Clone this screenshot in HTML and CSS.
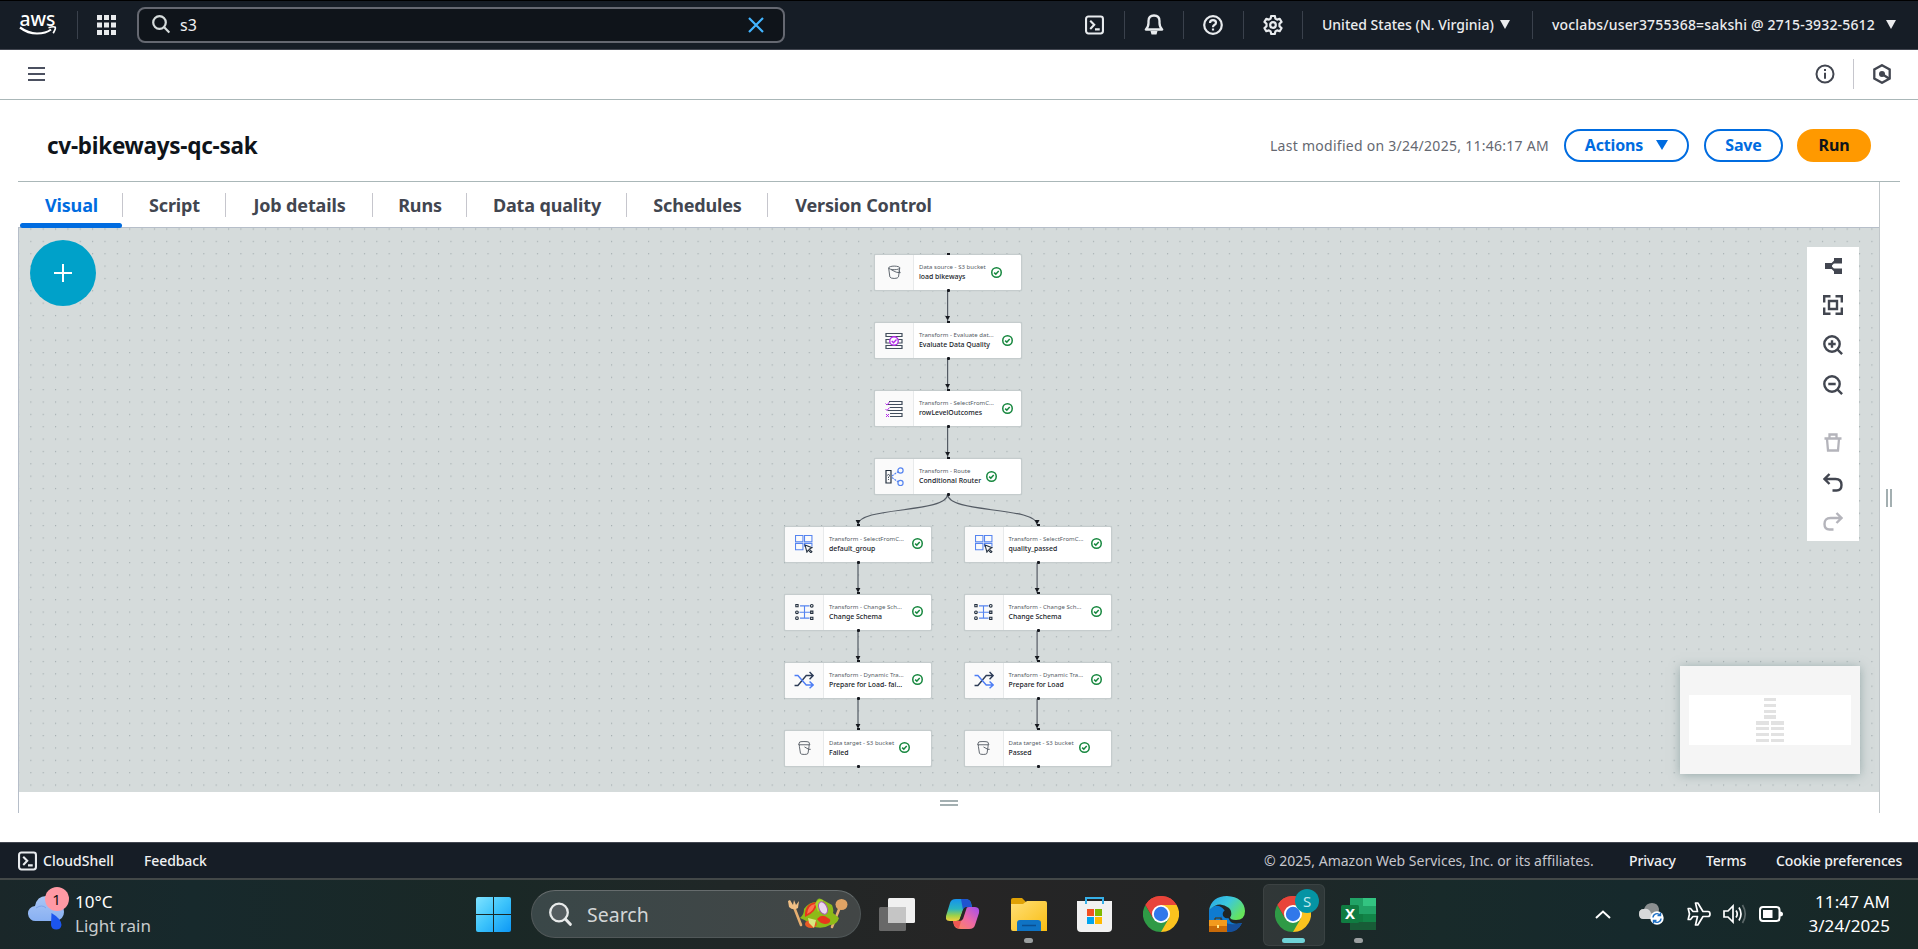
FILE: index.html
```html
<!DOCTYPE html>
<html lang="en">
<head>
<meta charset="utf-8">
<title>cv-bikeways-qc-sak</title>
<link rel="stylesheet" href="styles.css">
</head>
<body>
<svg class="defs" width="0" height="0">
  <defs>
    <symbol id="ok" viewBox="0 0 16 16"><circle cx="8" cy="8" r="6.900" fill="none" stroke="#16873e" stroke-width="2.200"/><path d="M4.600 8.200l2.400 2.200 4.200-4.600" fill="none" stroke="#16873e" stroke-width="2.200"/></symbol>
    <symbol id="shell" viewBox="0 0 20 20"><rect x="1.1" y="1.1" width="17.8" height="17.8" rx="2.5" fill="none" stroke="#e8ebee" stroke-width="2.200"/><path d="M5.500 5.500l4.200 4.300-4.200 4.300M10.500 14.600h5" fill="none" stroke="#e8ebee" stroke-width="2.200"/></symbol>
    <symbol id="bucket" viewBox="0 0 24 26"><g fill="none" stroke="#545b64" stroke-width="1.700"><ellipse cx="11.500" cy="4.500" rx="10.300" ry="3.300"/><path d="M1.200 4.500l2.200 16.500q1 3 8 3t8-3l2.300-16.500M6 8q10 6 16.500 5.500 0-2-3-3.500"/></g></symbol>
    <symbol id="target" viewBox="0 0 24 26"><g fill="none" stroke="#545b64" stroke-width="1.700"><path d="M1 7l2-5q1-1 8-1t9 1l2 5zM2.500 7v3l2 13q1 2 7 2t7-2l2-13V7M12 11l8 4.500h3.500"/></g></symbol>
    <symbol id="pick" viewBox="0 0 34 34"><g fill="none" stroke="#5584f0" stroke-width="2"><path d="M1 1h14v12H1zM18 1h14v12H18zM1 16h14v12H1zM18 22v-6h14v6"/></g><path d="M19 19l13 5-5 2.500 5 5-2 2-5-5-2.500 4z" fill="#fafafa" stroke="#232f3e" stroke-width="2"/></symbol>
    <symbol id="schema" viewBox="0 0 34 30"><path d="M9 4h17M8 15.500h19M9 26h17M17 4v22" fill="none" stroke="#5584f0" stroke-width="2"/><g fill="#fafafa" stroke="#232f3e" stroke-width="2"><path d="M1.500 1.500h4v4h-4zM28 13.500h4v4h-4zM28 24.500h4v4h-4z"/><circle cx="30" cy="4" r="2.400"/><circle cx="3.500" cy="15.500" r="2.400"/><circle cx="3.500" cy="26" r="2.400"/></g></symbol>
    <symbol id="shuffle" viewBox="0 0 36 32"><g fill="none" stroke-width="2.500"><path d="M1 26h6L22 8h11M28 1.500L34.500 8 28 14.500" stroke="#2b3a55"/><path d="M1 8h6l15 17h11M28 18.500l6.500 6.500-6.500 6" stroke="#4d7df5"/></g></symbol>
    <symbol id="chrome" viewBox="0 0 36 36"><path d="M2.400 9A18 18 0 0 1 33.600 9L18 18z" fill="#ea4335"/><path d="M33.600 9A18 18 0 0 1 18 36l0-18V9z" fill="#fcc31e"/><path d="M2.400 9A18 18 0 0 0 18 36l7.800-13.500L18 18 10.200 22.500z" fill="#2f9a46"/><path d="M18 9h15.600A18 18 0 0 0 2.400 9l7.800 13.500z" fill="#e8443a"/><circle cx="18" cy="18" r="9" fill="#fff"/><circle cx="18" cy="18" r="7.200" fill="#3178ea"/></symbol>
    <linearGradient id="win" x1="0" y1="0" x2="1" y2="1"><stop offset="0" stop-color="#7fe3ff"/><stop offset=".5" stop-color="#3cc3fb"/><stop offset="1" stop-color="#0c97f5"/></linearGradient>
    <linearGradient id="fold" x1="0" y1="0" x2="1" y2="1"><stop offset="0" stop-color="#ffdf76"/><stop offset="1" stop-color="#f9bd12"/></linearGradient>
    <linearGradient id="cloud" x1="0" y1="0" x2="0" y2="1"><stop offset="0" stop-color="#a9c6f5"/><stop offset="1" stop-color="#88b0f2"/></linearGradient>
    <linearGradient id="copa" x1="0" y1="0" x2="0" y2="1"><stop offset="0" stop-color="#1692ee"/><stop offset=".45" stop-color="#2ab5c0"/><stop offset=".75" stop-color="#9bd14a"/><stop offset="1" stop-color="#f4d03c"/></linearGradient>
    <linearGradient id="copb" x1="1" y1="0" x2="0" y2="1"><stop offset="0" stop-color="#a24df0"/><stop offset=".5" stop-color="#ee6aa4"/><stop offset="1" stop-color="#fd8a52"/></linearGradient>
    <linearGradient id="edgea" x1="0" y1="0" x2="1" y2=".6"><stop offset="0" stop-color="#25a4e8"/><stop offset=".5" stop-color="#3cc8dd"/><stop offset="1" stop-color="#66e45a"/></linearGradient>
    <pattern id="dots" x="11.300" y="0.450" width="12.356" height="12.356" patternUnits="userSpaceOnUse"><circle cx=".6" cy=".6" r=".6" fill="#98a4a6"/></pattern>
  </defs>
</svg>

<header class="top">
  <svg class="logo" width="38" height="24" viewBox="0 0 38 24"><text x="0.500" y="12.500" class="logo-text" textLength="36" lengthAdjust="spacingAndGlyphs">aws</text><path d="M1 14.500q8 6 17 6t14-4" fill="none" stroke="#fff" stroke-width="2.200"/><path d="M29.500 14.700q5-1.600 6.700-.5.800 1.500-2 6" fill="none" stroke="#fff" stroke-width="1.700"/></svg>
  <i class="sep sep-a"></i>
  <svg class="grid-icon" width="19" height="20" viewBox="0 0 19 20" fill="#e9ebed"><path d="M0 0h5v5H0zM7 0h5v5H7zM14 0h5v5h-5zM0 7.500h5v5H0zM7 7.500h5v5H7zM14 7.500h5v5h-5zM0 15h5v5H0zM7 15h5v5H7zM14 15h5v5h-5z"/></svg>
  <div class="search">
    <svg width="18" height="19" viewBox="0 0 18 19" fill="none" stroke="#d5dbdb" stroke-width="2.200"><circle cx="7.500" cy="7.500" r="6.300"/><path d="M12 12l5.300 5.600"/></svg>
    <span>s3</span>
    <svg class="clear" width="16" height="16" viewBox="0 0 16 16" stroke="#42b4ff" stroke-width="2.200"><path d="M1 1l14 14M15 1L1 15"/></svg>
  </div>
  <div class="cells">
    <div class="cell"><svg width="19" height="20"><use href="#shell" width="19" height="20"/></svg></div>
    <div class="cell"><svg width="20" height="21" viewBox="0 0 20 21" fill="none" stroke="#e8ebee" stroke-width="2.300"><path d="M1.800 15.500q2.700-2.500 2.700-6.500V7q0-5.500 5.500-5.500T15.500 7v2q0 4 2.700 6.500z" stroke-linejoin="round"/><path d="M6.500 17h7l-1 3.500h-5z" fill="#e8ebee" stroke="none"/></svg></div>
    <div class="cell"><svg width="20" height="20" viewBox="0 0 20 20" fill="none" stroke="#e8ebee" stroke-width="2.200"><circle cx="10" cy="10" r="8.800"/><path d="M7 8q0-2.800 3-2.800T13 7.800q0 1.500-2 2.400-1 .6-1 2M10 13.500v2"/></svg></div>
    <div class="cell"><svg width="20" height="20" viewBox="0 0 20 20" fill="none" stroke="#e8ebee" stroke-width="2.200"><path d="M8.200 1h3.600l.6 2.600 1.700 1 2.600-.8 1.800 3.100-2 1.900v2.400l2 1.900-1.800 3.100-2.600-.8-1.700 1-.6 2.600H8.200l-.6-2.600-1.700-1-2.600.8-1.800-3.100 2-1.900V8.800l-2-1.900 1.800-3.100 2.600.8 1.700-1z" stroke-linejoin="round"/><circle cx="10" cy="10" r="2.800"/></svg></div>
    <div class="cell region"><span class="region-name">United States (N. Virginia)</span><i class="tri"></i></div>
    <div class="cell account"><span class="account-name">voclabs/user3755368=sakshi @ 2715-3932-5612</span><i class="tri"></i></div>
  </div>
</header>

<div class="bar">
  <svg width="17" height="16" viewBox="0 0 17 16"><path d="M0 2h17M0 8h17M0 14h17" stroke="#4b5060" stroke-width="2.200"/></svg>
  <div class="bar-right">
    <svg width="20" height="20" viewBox="0 0 20 20" fill="none" stroke="#424650" stroke-width="2"><circle cx="10" cy="10" r="8.500"/><path d="M10 8.800v6M10 5v2"/></svg>
    <i></i>
    <svg width="18" height="20" viewBox="0 0 18 20" fill="none" stroke="#424650" stroke-width="2.300"><path d="M9 1.200l7.700 4.300v9L9 18.800l-7.700-4.300v-9z"/><circle cx="9" cy="10" r="3" fill="#424650" stroke="none"/><path d="M9 10l7 4.500"/></svg>
  </div>
</div>

<main class="page">
  <div class="title-row">
    <h1>cv-bikeways-qc-sak</h1>
    <div class="actions">
      <span class="modified">Last modified on 3/24/2025, 11:46:17 AM</span>
      <button class="btn b-actions">Actions<i class="tri"></i></button>
      <button class="btn b-save">Save</button>
      <button class="btn b-run">Run</button>
    </div>
  </div>
  <div class="workspace">
    <nav class="tabs">
      <a class="on">Visual</a><a>Script</a><a>Job details</a><a>Runs</a><a>Data quality</a><a>Schedules</a><a>Version Control</a>
    </nav>
    <section class="canvas">
      <svg class="layer" width="1860" height="564" viewBox="0 0 1860 564">
        <rect width="1860" height="564" fill="url(#dots)"/>
        <g fill="none" stroke="#545b64" stroke-width="1.200">
          <path d="M928.600 62.500v31M928.600 130.500v31M928.600 198.500v31M928.600 266c0 20-89.600 12-89.600 31M928.600 266c0 20 89.500 12 89.500 31M839 334v31M839 402v31M839 470v31M1018.100 334v31M1018.100 402v31M1018.100 470v31"/>
        </g>
        <g fill="#16191f">
          <path id="head" d="M926.200 88h4.800l-1.800 3.500h-1.200z"/>
          <use href="#head" y="68"/><use href="#head" y="136"/>
          <use href="#head" x="-89.600" y="204"/><use href="#head" x="89.500" y="204"/><use href="#head" x="-89.600" y="272"/><use href="#head" x="89.500" y="272"/><use href="#head" x="-89.600" y="340"/><use href="#head" x="89.500" y="340"/><use href="#head" x="-89.600" y="408"/><use href="#head" x="89.500" y="408"/>
        </g>
      </svg>

      <div class="node n1"><div class="pic"><svg width="13" height="15"><use href="#bucket" width="13" height="15"/></svg></div><div class="txt"><small>Data source - S3 bucket</small><b>load bikeways</b></div><svg class="ok"><use href="#ok"/></svg></div>
      <div class="node n2"><div class="pic"><svg width="18" height="18" viewBox="0 0 36 36" fill="#fafafa"><g stroke="#414d5c" stroke-width="2.400"><path d="M2 3h32v6H2zM2 15h32v7H2zM2 27h32v6H2z"/></g><circle cx="18" cy="18" r="8.500" stroke="#b12ae8" stroke-width="2.600"/><path d="M13.500 18l3.500 3.500 6-6.500" fill="none" stroke="#b12ae8" stroke-width="2.600"/></svg></div><div class="txt full"><small>Transform - Evaluate dat...</small><b>Evaluate Data Quality</b></div><svg class="ok"><use href="#ok"/></svg></div>
      <div class="node n3"><div class="pic"><svg width="18" height="18" viewBox="0 0 36 36" fill="none"><g stroke="#414d5c" stroke-width="2.400"><path d="M8 3h26v6H5M10 15h24v6H5M10 27h24v6H10"/></g><path d="M1 7l3 3 5-6M1 18l3 3 5-6M2 28l6 6M8 28l-6 6" stroke="#b12ae8" stroke-width="2"/></svg></div><div class="txt full"><small>Transform - SelectFromC...</small><b>rowLevelOutcomes</b></div><svg class="ok"><use href="#ok"/></svg></div>
      <div class="node n4"><div class="pic"><svg width="19" height="19" viewBox="0 0 38 38" fill="none"><path d="M2 7h10v25H2z" stroke="#232f3e" stroke-width="2.400"/><path d="M5 17q0-2 2-2t2 2-2 3v2M7 24v2" stroke="#232f3e" stroke-width="1.600"/><g stroke="#5584f0" stroke-width="2.400"><circle cx="31" cy="7" r="5.200"/><circle cx="31" cy="32" r="5.200"/><path d="M14 18L26 9.500M14 21l12 8.500" stroke-dasharray="4 2"/></g></svg></div><div class="txt"><small>Transform - Route</small><b>Conditional Router</b></div><svg class="ok"><use href="#ok"/></svg></div>

      <div class="node left r5"><div class="pic"><svg width="18" height="18"><use href="#pick" width="18" height="18"/></svg></div><div class="txt full"><small>Transform - SelectFromC...</small><b>default_group</b></div><svg class="ok"><use href="#ok"/></svg></div>
      <div class="node right r5"><div class="pic"><svg width="18" height="18"><use href="#pick" width="18" height="18"/></svg></div><div class="txt full"><small>Transform - SelectFromC...</small><b>quality_passed</b></div><svg class="ok"><use href="#ok"/></svg></div>
      <div class="node left r6"><div class="pic"><svg width="19" height="18"><use href="#schema" width="19" height="18"/></svg></div><div class="txt full"><small>Transform - Change Sch...</small><b>Change Schema</b></div><svg class="ok"><use href="#ok"/></svg></div>
      <div class="node right r6"><div class="pic"><svg width="19" height="18"><use href="#schema" width="19" height="18"/></svg></div><div class="txt full"><small>Transform - Change Sch...</small><b>Change Schema</b></div><svg class="ok"><use href="#ok"/></svg></div>
      <div class="node left r7"><div class="pic"><svg width="20" height="18"><use href="#shuffle" width="20" height="18"/></svg></div><div class="txt full"><small>Transform - Dynamic Tra...</small><b>Prepare for Load- fai...</b></div><svg class="ok"><use href="#ok"/></svg></div>
      <div class="node right r7"><div class="pic"><svg width="20" height="18"><use href="#shuffle" width="20" height="18"/></svg></div><div class="txt full"><small>Transform - Dynamic Tra...</small><b>Prepare for Load</b></div><svg class="ok"><use href="#ok"/></svg></div>
      <div class="node left r8"><div class="pic"><svg width="13" height="14"><use href="#target" width="13" height="14"/></svg></div><div class="txt"><small>Data target - S3 bucket</small><b>Failed</b></div><svg class="ok"><use href="#ok"/></svg></div>
      <div class="node right r8"><div class="pic"><svg width="13" height="14"><use href="#target" width="13" height="14"/></svg></div><div class="txt"><small>Data target - S3 bucket</small><b>Passed</b></div><svg class="ok"><use href="#ok"/></svg></div>

      <button class="add"><svg width="18" height="18" viewBox="0 0 18 18"><path d="M9 0v18M0 9h18" stroke="#fff" stroke-width="2"/></svg></button>

      <div class="tools">
        <svg width="17" height="16" viewBox="0 0 17 16" fill="#424650"><path d="M0 5h7v6H0zM9 0h8v5.500H9zM9 10.500h8V16H9z"/><path d="M6 7l4-4M6 9l4 4" stroke="#424650" stroke-width="1.800"/></svg>
        <svg width="20" height="20" viewBox="0 0 20 20" fill="none" stroke="#424650" stroke-width="2.400"><path d="M1.200 7.500V1.200h6.300M12.500 1.200h6.300v6.300M18.800 12.500v6.300h-6.300M7.500 18.800H1.200v-6.300M6 6h8v8H6z"/></svg>
        <svg width="20" height="20" viewBox="0 0 20 20" fill="none" stroke="#424650" stroke-width="2.400"><circle cx="9" cy="9" r="7.700"/><path d="M14.300 14.300l4.800 4.800M9 5.300v7.400M5.300 9h7.400"/></svg>
        <svg width="20" height="20" viewBox="0 0 20 20" fill="none" stroke="#424650" stroke-width="2.400"><circle cx="9" cy="9" r="7.700"/><path d="M14.300 14.300l4.800 4.800M5.300 9h7.400"/></svg>
        <svg class="trash" width="18" height="19" viewBox="0 0 18 19" fill="none" stroke="#b4b4bb" stroke-width="2.300"><path d="M.5 5.500h17M5.500 5V1.500h7V5M3 6l1 11.500h10L15 6"/></svg>
        <svg width="20" height="19" viewBox="0 0 20 19" fill="none" stroke="#424650" stroke-width="2.400"><path d="M6.500 1L1.500 6l5 5M2 6h10.500q6 0 6 6 0 5.500-5 5.500H9.500"/></svg>
        <svg width="20" height="19" viewBox="0 0 20 19" fill="none" stroke="#b4b4bb" stroke-width="2.400"><path d="M13.500 1l5 5-5 5M18 6H7.500q-6 0-6 6 0 5.500 5 5.500h4"/></svg>
      </div>

      <svg class="minimap" width="180" height="108" viewBox="0 0 180 108"><rect width="180" height="108" fill="#f5f5f5"/><rect x="9" y="29" width="162" height="50" fill="#fff"/><g fill="#e2e2e2"><path d="M84 32h12v3H84zM84 38h12v3H84zM84 44h12v3H84zM84 49h12v4H84zM76 55h13v4H76zM91 55h13v4H91zM76 61h13v3H76zM91 61h13v3H91zM76 67h13v3H76zM91 67h13v3H91zM76 73h13v3H76zM91 73h13v3H91z"/></g></svg>
    </section>
    <div class="drag"><i></i><i></i></div>
    <div class="side-drag"><i></i><i></i></div>
  </div>
</main>

<footer class="foot">
  <svg width="19" height="20"><use href="#shell" width="19" height="20"/></svg>
  <span class="f-shell">CloudShell</span><span class="f-feed">Feedback</span>
  <span class="f-copy">© 2025, Amazon Web Services, Inc. or its affiliates.</span>
  <span class="f-priv">Privacy</span><span class="f-terms">Terms</span><span class="f-cook">Cookie preferences</span>
</footer>

<div class="taskbar">
  <div class="weather">
    <svg width="38" height="46" viewBox="0 0 38 46"><path d="M8 36a7.500 7.500 0 0 1-1-15q2-10 11-10t11 8q7 1 7 8t-8 9z" fill="url(#cloud)"/><path d="M8 23q6-4 10 0" stroke="#7fa3e8" fill="none"/><path d="M23.500 28q10 6 10 12a5.300 5.300 0 0 1-10.500 0z" fill="#1c55ee"/></svg>
    <span class="badge">1</span>
    <div><p>10°C</p><p class="dim">Light rain</p></div>
  </div>
  <div class="dock">
    <div class="app"><svg width="35" height="35" viewBox="0 0 35 35"><path d="M2 0h15v17H0V2q0-2 2-2zM18 0h15q2 0 2 2v15H18zM0 18h17v17H2q-2 0-2-2zM18 18h17v15q0 2-2 2H18z" fill="url(#win)"/></svg></div>
    <div class="find">
      <svg width="23" height="24" viewBox="0 0 23 24" fill="#555d60" stroke="#e8eaea"><circle cx="10" cy="10.500" r="8.800" stroke-width="2.300"/><path d="M16.300 17l5 5.300" stroke-width="3" stroke-linecap="round"/></svg>
      <span>Search</span>
      <svg class="salad" width="61" height="32" viewBox="0 0 61 32"><g stroke="#e6ae70" stroke-width="2.600" stroke-linecap="round"><path d="M7 9l7 18M53 9l-8 20"/></g><path d="M1 3l1 6q4 4 9 1l1-7-3 4-2-5-1 5-3-5z" fill="#f0bf85"/><ellipse cx="54.500" cy="6.500" rx="6" ry="5.500" fill="#e0a365"/><path d="M13 20q4-3 4-9 5-7 12-7 2-6 7-2l9 5q2 5 1 8l6 5q-2 7-9 7-8 5-19 1-1-4-11-8z" fill="#8dbb18"/><path d="M18 19q-1-14 12-15 0 10-12 15zM30 21q5-6 11-1 4 2 1 5-7 3-12-4z" fill="#e8361d"/><path d="M20 16q1-9 8-10-1 7-8 10z" fill="#ff7550"/><path d="M28 6q3-6 8-4 0 8-5 12z" fill="#a9d52c"/><ellipse cx="36" cy="10" rx="4" ry="6.500" transform="rotate(-25 36 10)" fill="#ead7ee" stroke="#a65ab0"/><ellipse cx="24" cy="26" rx="6" ry="4" fill="#e95a26"/><path d="M21 20l8 2-2 8-5-5z" fill="#d9e981"/></svg>
    </div>
    <div class="app"><svg width="36" height="33" viewBox="0 0 36 33"><rect x="0" y="9" width="27" height="24" rx="1.500" fill="#686868"/><rect x="9" y="0" width="27" height="25" rx="1.500" fill="#f0f0f0"/><path d="M9 9h18v16H9z" fill="#c5c5c5"/></svg></div>
    <div class="app"><svg width="34" height="31" viewBox="0 0 34 31"><path d="M19 0q5 0 6 4l1 4h-5q-3 0-4 3l-3 9q-1 2-4 2H4q-5 0-4-5L4 4q1-4 6-4z" fill="url(#copa)"/><path d="M15 0h4q5 0 6 4l1 4h-5q-3 0-4 3z" fill="#2053cf"/><path d="M15 30q-6 0-7-4l-1-4h5q3 0 4-3l3-9q1-2 4-2h6q5 0 4 6l-4 12q-1 4-6 4z" fill="url(#copb)"/><path d="M8 26l-1-4h5q3 0 4-3l-3 10q-3 1-5-3z" fill="#ee5753"/><path d="M17 11q1-3 4-3l-4 12q-1 2-4 2z" fill="#282727"/></svg></div>
    <div class="app run"><svg width="36" height="33" viewBox="0 0 36 33"><path d="M0 2q0-2 2-2h9l4 4v5H0z" fill="#dfa105"/><path d="M0 6h12l4-3h18q2 0 2 2v28H2q-2 0-2-2z" fill="url(#fold)"/><path d="M6 33v-8q0-3 3-3h18q3 0 3 3v8z" fill="#0f73c4"/><path d="M11 27.500h14" stroke="#0a4f91" stroke-width="1.500"/></svg></div>
    <div class="app store"><svg width="35" height="35" viewBox="0 0 35 35"><path d="M9 7V1h17v6" fill="none" stroke="#36b0e8" stroke-width="2"/><path d="M0 4h35v27q0 4-4 4H4q-4 0-4-4z" fill="#f1f1f1"/><path d="M9 4v3M26 4v3" stroke="#36b0e8" stroke-width="2"/><path d="M10 12h7v7h-7z" fill="#f25022"/><path d="M18 12h7v7h-7z" fill="#7fba00"/><path d="M10 20h7v7h-7z" fill="#00a4ef"/><path d="M18 20h7v7h-7z" fill="#ffb900"/></svg></div>
    <div class="app"><svg width="36" height="36"><use href="#chrome" width="36" height="36"/></svg></div>
    <div class="app"><svg width="36" height="36" viewBox="0 0 36 36"><path d="M0 14v12q4 10 17 10 12 0 16-9-9 2-12-2-2-3-3-7Q10 4 0 14z" fill="#0f7bd0"/><path d="M12 20q3 10 15 8 4-1 6-1-4 9-13 9-9-2-8-16z" fill="#164f9c"/><path d="M0 14Q3 0 18 0q17 1 18 15 0 9-9 9-6 0-6-3 3-5-1-9Q10 4 0 14z" fill="url(#edgea)"/><circle cx="18" cy="18" r="4.300" fill="#202526"/><path d="M0 24h18v12H0z" fill="#c86a08"/><path d="M0 24h18v6H0z" fill="#f29a1d"/><path d="M8 29h2v3H8z" fill="#ffe98b"/><path d="M6 24v-2h6v2" stroke="#503000" fill="none"/></svg></div>
    <div class="app run active"><svg width="36" height="36"><use href="#chrome" width="36" height="36"/></svg><span class="s-badge">S</span></div>
    <div class="app run"><svg width="36" height="33" viewBox="0 0 36 33"><path d="M9 0h26v32H9z" fill="#21a366"/><path d="M22 0h13v8H22z" fill="#33c481"/><path d="M9 16h26v8H9z" fill="#107c41"/><path d="M9 24h26v8H9z" fill="#185c37"/><path d="M22 16h13v8H22z" fill="#128548"/><rect x="0" y="7" width="18" height="18" rx="1.500" fill="#107c41"/><text x="9" y="21" class="x-letter">X</text></svg></div>
  </div>
  <div class="tray">
    <svg width="16" height="9" viewBox="0 0 16 9" fill="none" stroke="#fff" stroke-width="2"><path d="M1 8l7-6.500L15 8"/></svg>
    <svg class="t-cloud" width="25" height="22" viewBox="0 0 25 22"><path d="M4 15Q0 15 0 10.500 0 6 5 6 7 0 13 0q6 0 7 6l-1 9z" fill="#8b8f90"/><path d="M4 16Q0 16 0 11 0 6 5 6q5-1 7 4l3 6z" fill="#d6d8d9"/><circle cx="18" cy="15" r="6.700" fill="#fff"/><path d="M14 14.500a4 4 0 0 1 7-2.500M22 15.500a4 4 0 0 1-7 2.500M21.500 9.500v3h-3M14.500 20.500v-3h3" fill="none" stroke="#1d6fc4" stroke-width="1.400"/></svg>
    <svg class="t-plane" width="24" height="24" viewBox="0 0 24 24" fill="none" stroke="#fff" stroke-width="1.700" stroke-linejoin="round"><path d="M8.500 1h2.300l5.200 8.500h5q2 0 2 2.500t-2 2.500h-5L10.800 23H8.500l2-8.500H6l-2.500 3H1.200L2.500 12 1.200 6.500h2.300l2.500 3h4.500z"/></svg>
    <svg class="t-vol" width="24" height="20" viewBox="0 0 24 20" fill="none" stroke="#fff" stroke-width="1.700"><path d="M1 7h4l5-5v16l-5-5H1zM13 6.500q2.500 3.500 0 7M16 3.500q4 6.500 0 13"/><path d="M19.500 1q5.500 9 0 18" stroke="#5b6768"/></svg>
    <svg class="t-bat" width="24" height="16" viewBox="0 0 24 16"><rect x="1" y="1" width="19.500" height="14" rx="3" fill="none" stroke="#fff" stroke-width="2"/><path d="M4 4h9.500v8H4zM21 5.500q3 0 3 2.500t-3 2.500z" fill="#fff"/></svg>
    <div class="clock"><p>11:47 AM</p><p>3/24/2025</p></div>
  </div>
</div>
</body>
</html>
```

FILE: styles.css
```css
* { box-sizing: border-box; }
body { margin: 0; width: 1918px; height: 949px; overflow: hidden; background: #fff; font-family: "Noto Sans", "Open Sans", sans-serif; display: flex; flex-direction: column; }
svg { display: block; flex: none; }
.defs { position: absolute; }
p, h1 { margin: 0; }
button { font-family: inherit; cursor: pointer; }
span { white-space: nowrap; }
i { display: block; flex: none; }

.top { height: 50px; flex: none; background: #161d26; border-top: 1px solid #000; border-bottom: 1px solid #424650; display: flex; align-items: center; padding: 0 0 1px 19px; color: #f0f1f3; }
.logo { overflow: visible; }
.logo-text { font-size: 19px; font-weight: 500; fill: #fff; }
.sep { width: 1px; height: 28px; background: #3a414c; }
.sep-a { margin: 0 19px 0 20px; }
.search { margin-left: 21px; width: 648px; height: 36px; border: 2px solid #656871; border-radius: 8px; background: #0f141a; display: flex; align-items: center; padding: 0 19px 0 13px; font-size: 16px; }
.search span { margin-left: 10px; }
.clear { margin-left: auto; }
.cells { display: flex; margin-left: 279px; }
.cell { width: 59.500px; height: 28px; display: flex; align-items: center; justify-content: center; border-left: 1px solid #3a414c; font-size: 14px; font-weight: 500; color: #ebecee; }
.cell:first-child { border-color: transparent; }
.region { width: 230px; justify-content: flex-start; padding-left: 19px; gap: 7px; }
.account { width: 385px; justify-content: flex-start; padding-left: 19px; gap: 7px; }
.region-name { width: 171px; }
.account-name { width: 327px; letter-spacing: .16px; }
.tri { width: 0; height: 0; border: 5px solid transparent; border-top: 9px solid currentColor; border-bottom: 0; }

.bar { height: 50px; flex: none; border-bottom: 1px solid #aab7b8; display: flex; align-items: center; padding: 0 27px 1px 28px; justify-content: space-between; }
.bar-right { display: flex; align-items: center; }
.bar-right i { width: 1px; height: 30px; background: #c6c6cd; margin: 0 19px 0 18px; }

.page { height: 742px; flex: none; padding: 0 18px; }
.title-row { height: 82px; padding: 9px 29px 0; border-bottom: 1px solid #aab7b8; display: flex; align-items: center; justify-content: space-between; }
h1 { font-size: 22.500px; font-weight: 700; color: #0f141a; letter-spacing: -.28px; }
.actions { display: flex; align-items: center; }
.modified { width: 278px; margin-right: 16px; font-size: 14px; color: #656871; letter-spacing: .27px; }
.btn { height: 33px; border: 2px solid #006ce0; border-radius: 17px; background: #fff; color: #006ce0; font-size: 16px; font-weight: 700; letter-spacing: -.15px; display: flex; align-items: center; justify-content: center; padding: 0; }
.b-actions { width: 125px; gap: 13px; margin-right: 15px; }
.b-actions .tri { border-width: 10px 6px 0; }
.b-save { width: 79px; margin-right: 14px; }
.b-run { width: 74px; background: #ff9900; border-color: #ff9900; color: #0f141a; }

.workspace { position: relative; width: 1862px; height: 631px; border-right: 1px solid #c1c7ca; }
.tabs { height: 46px; display: grid; grid-template-columns: 103px 103px 147px 94px 160px 141px 191px; padding-left: 2px; border-bottom: 1px solid #b6bec9; }
.tabs a { position: relative; display: flex; align-items: center; justify-content: center; font-size: 18px; font-weight: 700; color: #424650; white-space: nowrap; letter-spacing: -.15px; }
.tabs a::before { content: ""; position: absolute; right: 0; top: 11px; width: 1px; height: 24px; background: #c6c6cd; }
.tabs a:last-child::before { display: none; }
.tabs .on { color: #006ce0; }
.on::after { content: ""; position: absolute; left: 0; bottom: -1px; width: 102px; height: 5px; background: #006ce0; border-radius: 3px; }
.canvas { position: relative; height: 564px; background: #d5dbdb; border-left: 1px solid #b6bec9; overflow: hidden; }
.layer { position: absolute; left: 0; top: 0; }
.add { position: absolute; left: 11px; top: 12px; width: 66px; height: 66px; border: 0; border-radius: 50%; background: #00a1c9; display: flex; align-items: center; justify-content: center; }

.node { position: absolute; width: 148px; height: 37px; background: #fff; border: .6px solid #c5cccd; border-radius: 2px; display: flex; align-items: center; box-shadow: 0 0 1px #aab7b8; }
.node::before, .node::after { content: ""; position: absolute; left: 72px; width: 3px; height: 3px; background: #16191f; }
.node::before { top: -2.500px; height: 2px; }
.node::after { bottom: -2px; border-radius: 1px; }
.pic { width: 39px; height: 100%; background: #fafafa; border-right: 1px solid #e8eaeb; display: flex; align-items: center; justify-content: center; border-radius: 2px 0 0 2px; }
.txt { margin: 0 0 1px 5px; display: flex; flex-direction: column; }
.txt.full { width: 77.500px; }
.txt small, .txt b { white-space: nowrap; line-height: 10px; }
.txt small { font-size: 6px; color: #545b64; letter-spacing: .03px; }
.txt b { font-size: 6.900px; font-weight: 500; color: #16191f; }
.ok { width: 11px; height: 11px; margin: 0 0 1px 5px; }
.n1, .n2, .n3, .n4 { left: 855px; }
.n1 { top: 26px; }
.n2 { top: 94px; }
.n3 { top: 162px; }
.n4 { top: 230px; }
.left { left: 765px; }
.right { left: 944.500px; }
.r5 { top: 297.500px; }
.r6 { top: 365.500px; }
.r7 { top: 433.500px; }
.r8 { top: 501.500px; }

.tools { position: absolute; left: 1788px; top: 19px; width: 52px; height: 294px; background: #fff; display: flex; flex-direction: column; align-items: center; padding-top: 11px; gap: 20px; }
.tools svg:first-child { margin-bottom: 1px; }
.tools .trash { margin: 18px 0 1px; }
.minimap { position: absolute; left: 1661px; top: 438px; box-shadow: 0 1px 10px rgba(100, 130, 130, .55); }
.drag { height: 21px; border-left: 1px solid #b6bec9; display: flex; flex-direction: column; gap: 2px; padding: 8px 0 0 921px; }
.drag i { width: 18px; height: 2px; background: #a3afb1; }
.side-drag { position: absolute; left: 1868px; top: 307px; display: flex; gap: 2px; }
.side-drag i { width: 2px; height: 18px; background: #a3afb1; }

.foot { height: 36px; flex: none; background: #161d26; border-top: 1px solid #424650; display: flex; align-items: center; padding-left: 18px; font-size: 14px; color: #f0f1f3; }
.f-shell { margin-left: 6px; width: 101px; font-weight: 500; }
.f-feed { width: 1120px; font-weight: 500; letter-spacing: -.1px; }
.f-copy { width: 365px; color: #c6c6cd; }
.f-priv, .f-terms, .f-cook { font-weight: 500; letter-spacing: -.15px; }
.f-priv { width: 77px; }
.f-terms { width: 70px; }

.taskbar { height: 71px; flex: none; border-top: 2px solid #434848; background: linear-gradient(90deg, #1a2729 0, #17292c 10%, #1a2826 26%, #202727 38%, #262525 50%, #232526 62%, #182a2a 75%, #16292c 85%, #182826 100%); display: flex; position: relative; color: #fff; }
.weather { position: relative; display: flex; padding: 5px 0 0 28px; width: 460.500px; gap: 9px; font-size: 17px; line-height: 24px; }
.weather div { padding-top: 5px; }
.weather .dim { color: #c8cccd; }
.badge { position: absolute; left: 44.500px; top: 7px; width: 24px; height: 24px; border-radius: 50%; background: #ff99a4; color: #111; font-size: 15px; text-align: center; line-height: 24px; }
.dock { display: flex; height: 68px; align-items: center; }
.app { position: relative; width: 66px; height: 60px; display: flex; align-items: center; justify-content: center; }
.store { padding-right: 2px; }
.find { width: 330px; height: 48px; margin: 0 3px 0 4.500px; border-radius: 24px; border: 1px solid #515859; border-top-color: #666c6d; background: linear-gradient(90deg, #3a4748, #424646); display: flex; align-items: center; padding: 0 12px 0 17px; font-size: 19.500px; color: #d3d6d7; }
.find span { margin-left: 15px; }
.salad { margin-left: auto; }
.run::after { content: ""; position: absolute; left: 28px; bottom: 1px; width: 9px; height: 5px; border-radius: 3px; background: #9b9fa0; }
.active::before { content: ""; position: absolute; left: 3px; top: 0; width: 60px; height: 60px; border-radius: 6px; background: rgba(255, 255, 255, .08); border: 1px solid rgba(255, 255, 255, .06); }
.active::after { left: 22px; width: 23px; background: #6fd3d8; }
.active svg { position: relative; }
.s-badge { position: absolute; left: 35px; top: 5px; width: 24px; height: 24px; border-radius: 50%; background: #0594a4; color: #bfe8ec; font-size: 15px; line-height: 24px; text-align: center; }
.x-letter { font-size: 15px; font-weight: 700; fill: #fff; text-anchor: middle; }
.tray { margin-left: auto; height: 68px; display: flex; align-items: center; padding-right: 28px; }
.t-cloud { margin-left: 28px; }
.t-plane { margin-left: 23px; }
.t-vol { margin-left: 12px; }
.t-bat { margin-left: 12px; }
.clock { width: 107px; text-align: right; font-size: 17px; line-height: 24px; letter-spacing: .1px; }
```
